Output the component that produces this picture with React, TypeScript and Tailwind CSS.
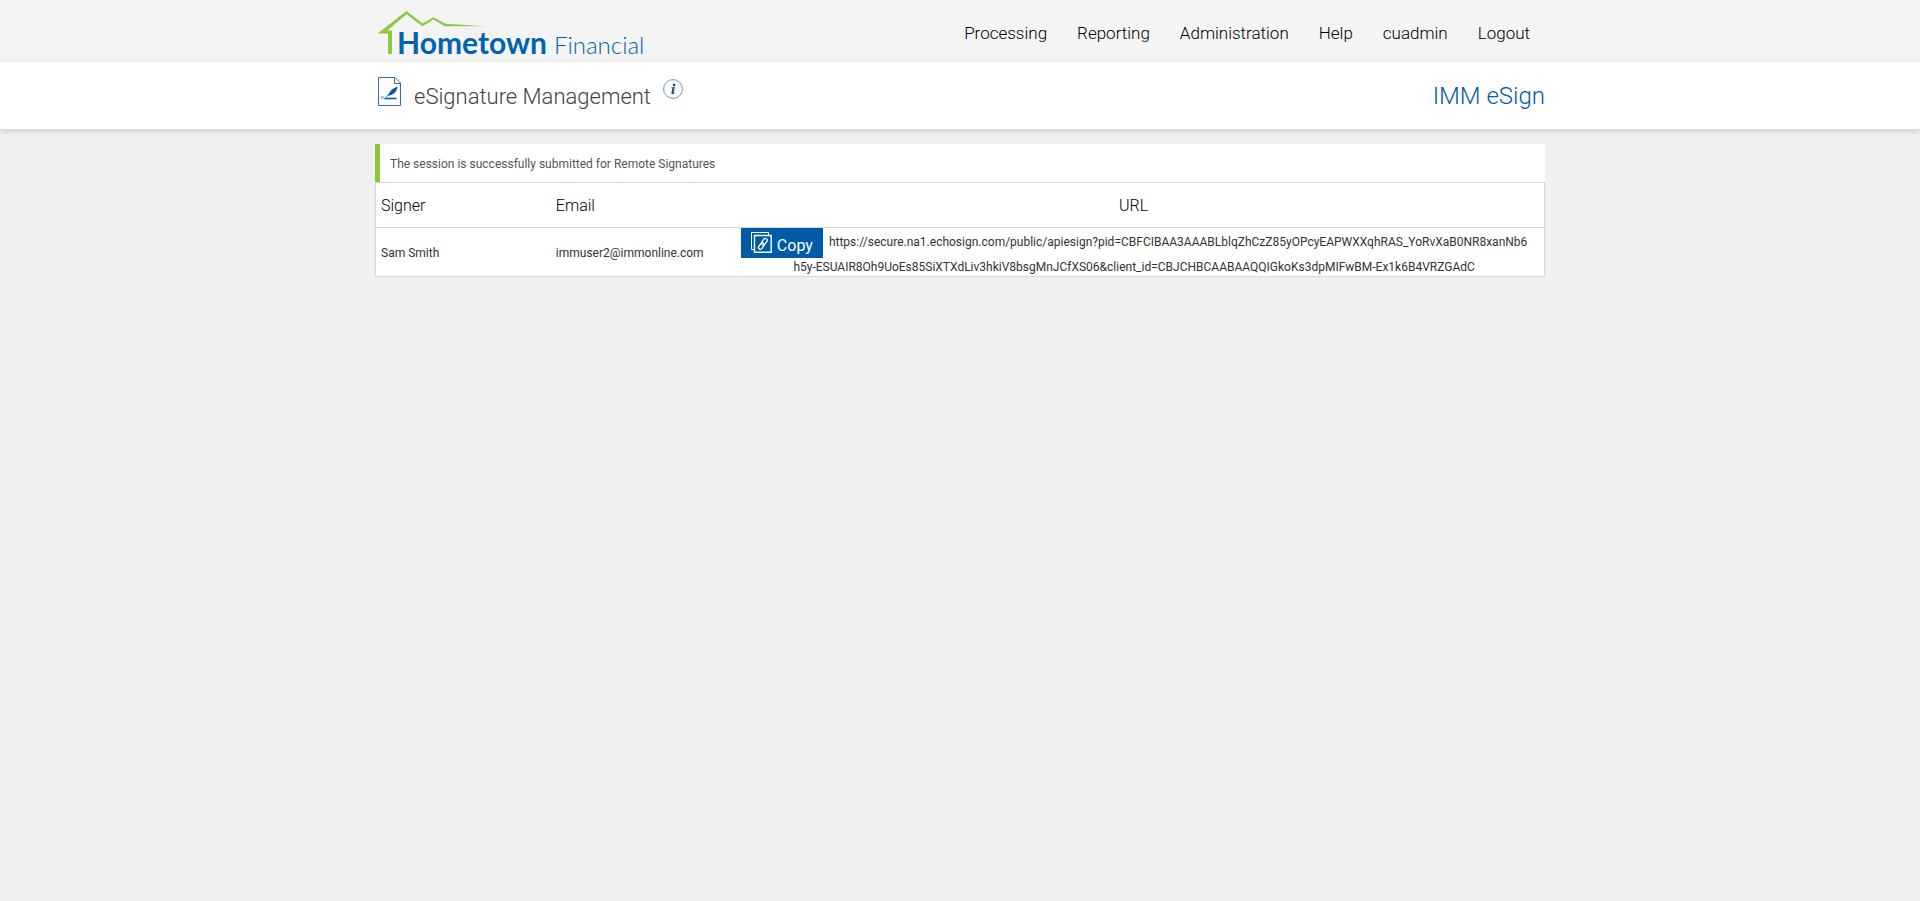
const navItems = ['Processing', 'Reporting', 'Administration', 'Help', 'cuadmin', 'Logout']

const signers = [
  {
    name: 'Sam Smith',
    email: 'immuser2@immonline.com',
    url: 'https://secure.na1.echosign.com/public/apiesign?pid=CBFCIBAA3AAABLblqZhCzZ85yOPcyEAPWXXqhRAS_YoRvXaB0NR8xanNb6h5y-ESUAIR8Oh9UoEs85SiXTXdLiv3hkiV8bsgMnJCfXS06&client_id=CBJCHBCAABAAQQIGkoKs3dpMIFwBM-Ex1k6B4VRZGAdC',
  },
]

function Logo() {
  return (
    <a href="#" aria-label="Hometown Financial" className="block">
      <svg width="272" height="62" viewBox="0 0 272 62">
        <path
          d="M2.5 33.5 31.5 11 47.5 23.6 58.5 17.2 70.5 23.8 111 26.3 69.5 26.2 58.5 19.6 47.5 26.2 31.5 14.2 12.5 30.5H17V54H13V33.5Z"
          fill="#8bcb41"
        />
        <text x="22" y="54" fontSize="30" className="fill-[#0063b1] font-['Lato',sans-serif] font-bold">
          Hometown
        </text>
        <text x="179" y="54" fontSize="24" className="fill-[#0063b1] font-['Lato',sans-serif] font-light">
          Financial
        </text>
      </svg>
    </a>
  )
}

function DocumentIcon() {
  return (
    <svg width="24" height="30" viewBox="0 0 24 30" fill="none" stroke="#3a6ea8" aria-hidden="true">
      <path d="M.5.5H17L22.5 6V28.5H.5Z" />
      <path d="M16.5 .5V6.5H22.5" />
      <path d="M6.5 21.5H18.5" stroke="#005baa" strokeWidth="1.6" />
      <path d="M7.5 20.5 13 15.5" stroke="#005baa" strokeWidth=".8" />
      <path d="M10 18.8C11 14.5 14.5 11.2 19.5 9.8 19.1 14 16 17.6 11.5 18.6Z" fill="#005baa" stroke="none" />
      <path d="m3 19.2 2.6 2.6m0-2.6-2.6 2.6" strokeWidth=".8" />
    </svg>
  )
}

function InfoIcon() {
  return (
    <svg width="20" height="20" viewBox="0 0 20 20" aria-hidden="true">
      <circle cx="10" cy="10" r="9.4" fill="none" stroke="#6d94bb" />
      <circle cx="11.1" cy="6" r="1.4" fill="#1f5288" />
      <path d="M8.3 8.6 11.9 8.1 10.6 13.5Q10.5 14.3 12 13.2L12.3 13.6Q10.7 15.3 9.4 15.2 8 15 8.4 13.5L9.4 9.3 8.2 9.1Z" fill="#1f5288" />
    </svg>
  )
}

function CopyLinkIcon() {
  return (
    <svg width="21" height="21" viewBox="0 0 21 21" fill="none" stroke="#fff" aria-hidden="true">
      <path d="M3 17.5H.5V.5H17.5V3" />
      <path d="M3.5 3.5H20.2V20.2H3.5Z" strokeWidth="1.4" />
      <g transform="rotate(35 11.8 11.8)" strokeWidth="1.3">
        <rect x="10" y="5.6" width="3.8" height="7.2" rx="1.9" />
        <rect x="10" y="10.8" width="3.8" height="7.2" rx="1.9" />
      </g>
    </svg>
  )
}

export default function App() {
  return (
    <div className="min-h-screen bg-[#f0f0f0] font-['Roboto',sans-serif] text-xs text-[#333]">
      <header className="bg-[#f4f4f4]">
        <div className="mx-auto flex max-w-[1170px] items-center justify-between pr-[15px]">
          <Logo />
          <nav className="flex gap-[30px] pt-1 text-[17px] font-light text-black">
            {navItems.map((item) => (
              <a key={item} href="#">
                {item}
              </a>
            ))}
          </nav>
        </div>
      </header>

      <div className="bg-white shadow-[0_2px_6px_rgba(0,0,0,0.15)]">
        <div className="mx-auto flex h-[67px] max-w-[1170px] items-center justify-between">
          <div className="flex items-start pb-[2px] pl-[3px]">
            <DocumentIcon />
            <h1 className="ml-3 pt-[5px] text-[22px] leading-[30px] font-light text-[#444]">eSignature Management</h1>
            <button type="button" aria-label="Information" className="ml-3 pt-[2px]">
              <InfoIcon />
            </button>
          </div>
          <div className="text-2xl font-light text-[#005baa]">IMM eSign</div>
        </div>
      </div>

      <main className="mx-auto max-w-[1170px] pt-[15px]">
        <div role="status" className="border-l-[5px] border-[#8cc63f] bg-white px-[10px] pt-[2px] leading-9 text-[#555]">
          The session is successfully submitted for Remote Signatures
        </div>
        <table className="w-full table-fixed border-collapse border border-[#d8d8d8] bg-white">
          <colgroup>
            <col className="w-[15%]" />
            <col className="w-[15%]" />
            <col />
          </colgroup>
          <thead>
            <tr className="h-[45px] text-base text-black">
              <th className="px-[5px] pt-[2px] text-left font-light">Signer</th>
              <th className="px-[5px] pt-[2px] text-left font-light">Email</th>
              <th className="pt-[2px] pr-[3px] text-center font-light">URL</th>
            </tr>
          </thead>
          <tbody>
            {signers.map((signer) => (
              <tr key={signer.email} className="border-t border-[#d8d8d8]">
                <td className="px-[5px] pt-[2px]">{signer.name}</td>
                <td className="px-[5px] pt-[2px]">{signer.email}</td>
                <td className="pr-[15px] pl-[13px] text-center leading-[18px] break-all">
                  <button
                    type="button"
                    className="mr-[6px] inline-flex h-[30px] items-start gap-[5px] bg-[#005ba6] px-[10px] pt-1 align-middle text-base text-white"
                  >
                    <CopyLinkIcon />
                    <span className="leading-[28px]">Copy</span>
                  </button>
                  {signer.url}
                </td>
              </tr>
            ))}
          </tbody>
        </table>
      </main>
    </div>
  )
}
